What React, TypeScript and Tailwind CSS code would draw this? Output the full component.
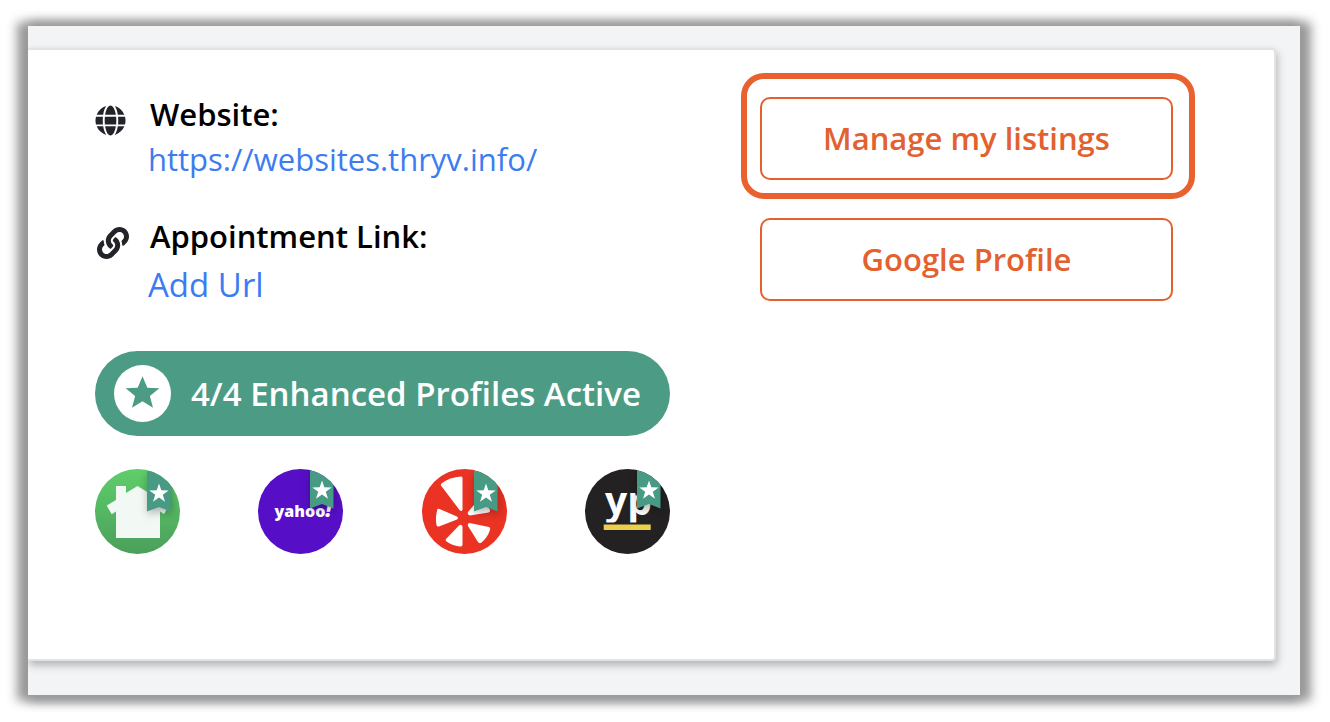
import type { ReactNode } from 'react';
import { FaGlobe, FaLink } from 'react-icons/fa';

const STAR = '0,-10 2.8,-3.4 9.8,-3.1 4.3,1.4 6.1,8.3 0,4.5 -6.1,8.3 -4.3,1.4 -9.8,-3.1 -2.8,-3.4';
const THIN_STAR = '0,-10 2.3,-3.2 9.7,-3.1 3.8,1.2 6,8.3 0,4 -6,8.3 -3.8,1.2 -9.7,-3.1 -2.3,-3.2';

function Ribbon({ id, y }: { id: string; y: number }) {
  return (
    <g clipPath={`url(#${id}-clip)`}>
      <g transform={`translate(0 ${y})`}>
        <path
          d="M52 -1V39.500L64 35L75.500 39.500V-1Z"
          fill="#479a83"
          style={{ filter: 'drop-shadow(1px 3px 4px rgba(0,0,0,0.3))' }}
        />
        <polygon points={THIN_STAR} transform="translate(64 21.500)" fill="white" />
      </g>
    </g>
  );
}

function Badge({ id, label, fill, ribbonY = 0, children }: {
  id: string;
  label: string;
  fill: string;
  ribbonY?: number;
  children: ReactNode;
}) {
  return (
    <svg viewBox="0 0 85 85" className="size-[85px]" role="img" aria-label={label}>
      <defs>
        <linearGradient id="green" x1="0" y1="0" x2="0" y2="1">
          <stop offset="0" stopColor="#5fce6a" />
          <stop offset="1" stopColor="#4a9f5c" />
        </linearGradient>
        <clipPath id={`${id}-clip`}>
          <circle cx="42.5" cy="42.5" r="42.5" />
        </clipPath>
      </defs>
      <circle cx="42.5" cy="42.5" r="42.5" fill={fill} />
      {children}
      <Ribbon id={id} y={ribbonY} />
    </svg>
  );
}

function Detail({ icon, label, children }: { icon: ReactNode; label: string; children: ReactNode }) {
  return (
    <div className="flex items-start">
      <div className="w-[53px] shrink-0 pt-[13px] text-[#232429]">{icon}</div>
      <div>
        <h2 className="pl-[2px] text-[31px] leading-[44px] font-semibold text-black">{label}</h2>
        {children}
      </div>
    </div>
  );
}

const buttonClass =
  'block h-[83px] w-full rounded-[10px] border-2 border-[#e3602f] bg-white text-[31px] font-semibold text-[#e3602f]';

export default function App() {
  return (
    <div className="bg-white px-7 py-[26px] font-['Open_Sans',sans-serif] pr-[30px]">
      <div className="shadow-[-6px_1px_10px_5px_#999,6px_1px_10px_5px_#999]">
        <main className="overflow-hidden bg-[#f3f4f6] pt-[22px] pr-6 pb-[34px]">
          <section className="flex gap-[71px] rounded-r-[4px] border-2 border-l-0 border-[#e2e3e5] bg-white pt-[42px] pr-[79px] pb-[105px] pl-[67px] shadow-[1px_4px_9px_rgba(0,0,0,0.28)]">
            <div className="w-[575px] shrink-0">
              <div className="flex flex-col gap-8">
                <Detail icon={<FaGlobe size={31} />} label="Website:">
                  <a
                    href="https://websites.thryv.info/"
                    className="block text-[31px] leading-[46px] text-[#3c7cf0]"
                  >
                    https://websites.thryv.info/
                  </a>
                </Detail>
                <Detail icon={<FaLink size={32} className="ml-[2px]" />} label="Appointment Link:">
                  <a href="#add-url" className="block text-[33px] leading-[54px] text-[#3c7cf0]">
                    Add Url
                  </a>
                </Detail>
              </div>

              {/* Active profiles pill */}
              <div className="mt-[39px] flex h-[85px] items-center gap-5 rounded-full bg-[#4c9c85] pl-[19px] text-[33px] font-semibold whitespace-nowrap text-white">
                <svg viewBox="-28.5 -28.5 57 57" className="size-[57px] shrink-0" aria-hidden="true">
                  <circle r="28.5" fill="white" />
                  <polygon points={STAR} transform="scale(1.720)" fill="#4c9c85" />
                </svg>
                4/4 Enhanced Profiles Active
              </div>

              {/* Directories */}
              <div className="mt-[33px] flex justify-between">
                <Badge id="nextdoor" label="Nextdoor" fill="url(#green)" ribbonY={3}>
                  <path
                    d="M21 17H31V24L42.500 17L74 36.500L69 45L65 42.500V69H21V42.500L16.700 45.300L11.700 36.500L21 31Z"
                    fill="#f2f8f4"
                  />
                </Badge>
                <Badge id="yahoo" label="Yahoo" fill="#560fc6">
                  <text x="16.5" y="47.5" fill="white" fontFamily="Open Sans" fontWeight="800" fontSize="16">
                    yahoo<tspan fontStyle="italic" fontSize="21">!</tspan>
                  </text>
                </Badge>
                <Badge id="yelp" label="Yelp" fill="#ea3323" ribbonY={3}>
                  <g fill="white">
                    <path d="M19.500 14.500Q28 8 39 7.500Q40.500 7.500 40.500 9V40.500Q40 43 37.500 41L19 16.500Q18.500 15.500 19.500 14.500Z" />
                    <path d="M15.500 40Q16.500 39.500 17.500 40L35 47.500Q37 49 35 50.500L17 57.500Q15 58 14.500 56Q13 48 15.500 40Z" />
                    <path d="M24 70L37 56.500Q39.500 54.500 40.500 57.500V76Q40 78 37.500 77.500Q30 76.500 24.500 72.500Q23 71.500 24 70Z" />
                    <path d="M47.500 54L67 58Q69 59 68 61Q65.500 68.500 59.500 73.500Q57.500 75 56 73L46 57Q45 54.500 47.500 54Z" />
                    <path d="M46 43L57 30Q58.500 28.500 60 30Q65.500 35 68 41Q68.500 43 66.500 43.500L48 46.500Q45 46 46 43Z" />
                  </g>
                </Badge>
                <Badge id="yp" label="Yellow Pages" fill="#232122">
                  <text x="20" y="46" fill="white" fontFamily="Open Sans" fontWeight="700" fontSize="39">
                    yp
                  </text>
                  <rect x="17" y="53.5" width="50" height="9" fill="#232122" />
                  <rect x="18.7" y="55.5" width="47" height="5.500" fill="#ecd04b" />
                </Badge>
              </div>
            </div>

            <div className="-mt-[19px] min-w-0 flex-1">
              <div className="rounded-[23px] border-6 border-[#e8612f] pt-[18px] pr-4 pb-[13px] pl-[13px]">
                <button type="button" className={buttonClass}>
                  Manage my listings
                </button>
              </div>
              <div className="mt-[19px] pr-[22px] pl-[19px]">
                <button type="button" className={buttonClass}>
                  Google Profile
                </button>
              </div>
            </div>
          </section>
        </main>
      </div>
    </div>
  );
}
